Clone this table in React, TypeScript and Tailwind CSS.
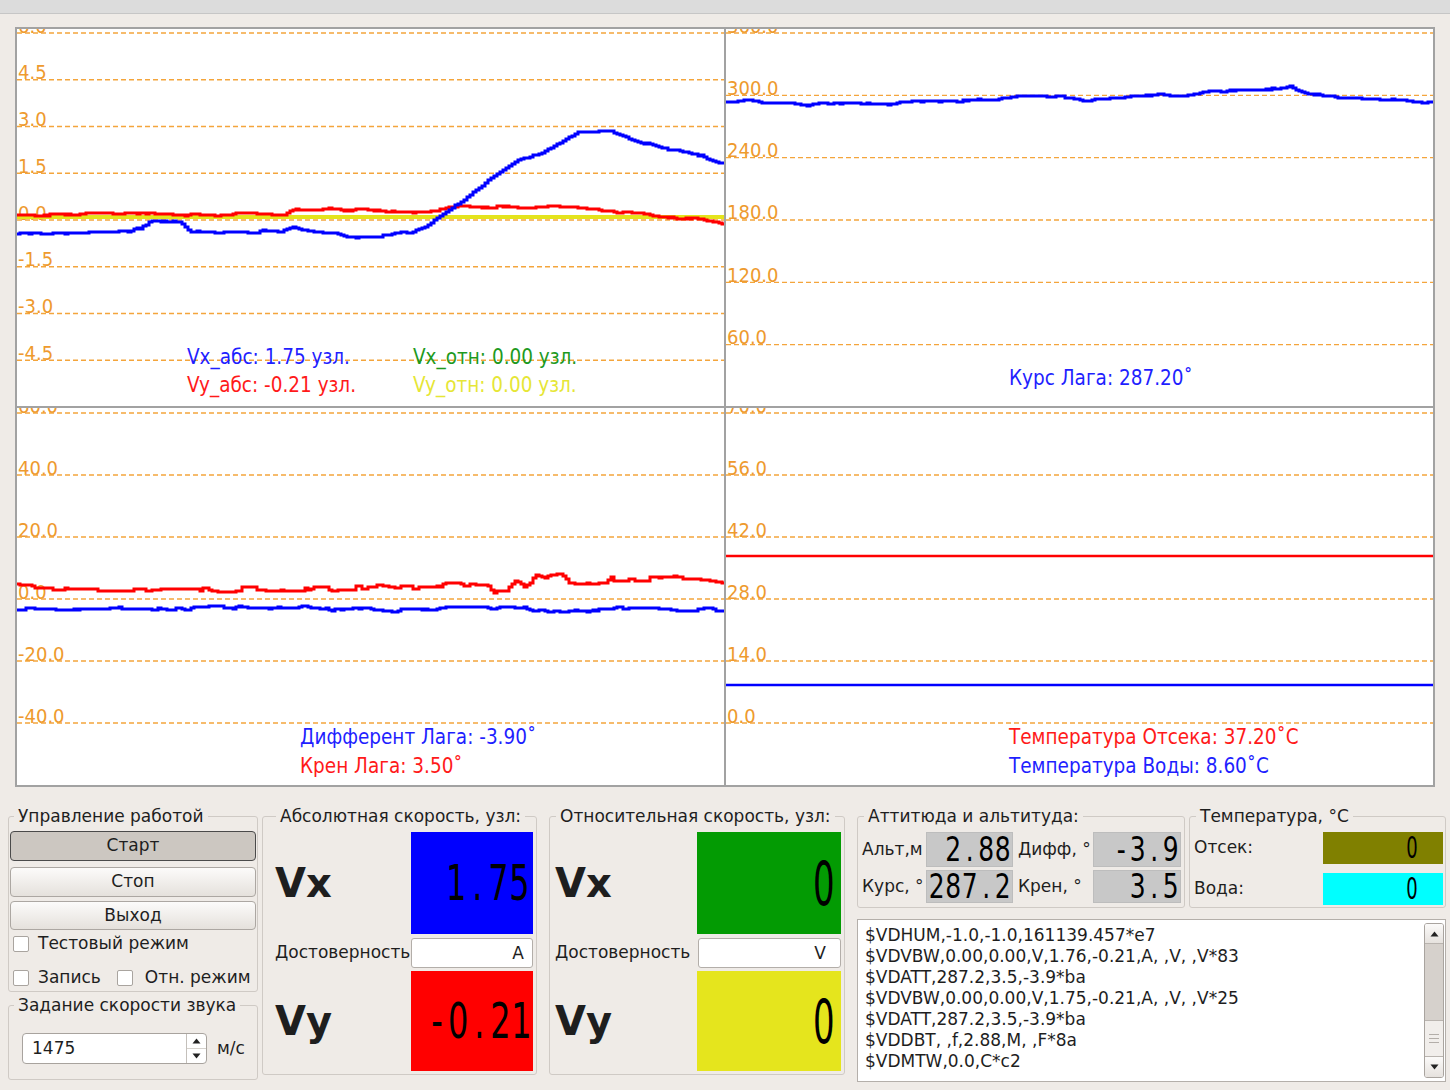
import type { ReactNode } from 'react'

// deterministic noise so the traces look the same on every render
function rng(seed: number): () => number {
  let s = seed >>> 0
  return () => {
    s = (Math.imul(s, 1664525) + 1013904223) >>> 0
    return s / 4294967296
  }
}

function lerp(keys: number[][], x: number): number {
  for (let i = 1; i < keys.length; i++) {
    if (x <= keys[i][0]) {
      const [x0, y0] = keys[i - 1]
      const [x1, y1] = keys[i]
      return y0 + ((y1 - y0) * (x - x0)) / (x1 - x0 || 1)
    }
  }
  return keys[keys.length - 1][1]
}

// stair-step trace through key points, like a sampled log
function trace(keys: number[][], amp: number, seed: number, step = 3): string {
  const rand = rng(seed)
  let off = 0
  const end = keys[keys.length - 1][0]
  let d = ''
  for (let x = keys[0][0]; x <= end; x += step) {
    if (rand() < 0.45) off = Math.max(-amp, Math.min(amp, off * 0.8 + (rand() - 0.5) * amp * 1.6))
    const y = Math.round(lerp(keys, x) + off)
    d += d ? `H${x}V${y}` : `M${x} ${y}`
  }
  return d + `H${end}`
}

const W = 707
const H = 377

interface Legend {
  x: number
  y: number
  color: string
  text: string
}

interface ChartProps {
  first: number
  step: number
  labels: string[]
  children?: ReactNode
  legends: Legend[]
}

function Chart({ first, step, labels, children, legends }: ChartProps) {
  return (
    <svg
      width={W}
      height={H}
      viewBox={`0 0 ${W} ${H}`}
      className="block bg-white font-['DejaVu_Sans_Condensed','DejaVu_Sans',sans-serif] [font-stretch:condensed]"
    >
      {labels.map((l, i) => {
        const y = first + i * step
        return (
          <g key={l}>
            <text x={1} y={y - 0.5} fill="#ee9a2e" fontSize={20}>
              {l}
            </text>
            <line x1={0} x2={W} y1={y} y2={y} stroke="#f4a53c" strokeWidth={1.3} strokeDasharray="5 3" />
          </g>
        )
      })}
      {children}
      {legends.map((l) => (
        <text key={l.text} x={l.x} y={l.y} fill={l.color} fontSize={20.5}>
          {l.text}
        </text>
      ))}
    </svg>
  )
}

const speedBlue = trace(
  [
    [0, 206], [43, 206], [113, 204], [128, 197], [133, 193], [163, 193], [173, 203], [263, 203],
    [273, 200], [303, 204], [323, 207], [393, 205], [408, 199], [428, 185], [463, 159], [503, 131],
    [538, 116], [563, 102], [593, 100], [613, 108], [643, 119], [683, 128], [707, 133]
  ],
  2,
  11
)
const speedRed = trace(
  [
    [0, 186], [183, 185], [268, 185], [275, 180], [323, 181], [333, 183], [343, 180], [363, 182],
    [383, 183], [423, 181], [443, 178], [483, 178], [543, 179], [593, 182], [633, 185], [673, 190],
    [707, 196]
  ],
  1.5,
  23
)
const course = trace(
  [
    [0, 72], [44, 72], [64, 74], [94, 76], [124, 75], [174, 74], [224, 73], [264, 71], [294, 68],
    [334, 68], [364, 71], [394, 70], [414, 68], [434, 65], [449, 68], [484, 63], [534, 62], [549, 60],
    [564, 57], [574, 62], [604, 67], [654, 69], [684, 72], [707, 74]
  ],
  1.5,
  5
)
const rollRed = trace(
  [
    [0, 178], [100, 179], [200, 180], [300, 179], [420, 179], [463, 180], [488, 184], [498, 172],
    [508, 182], [518, 167], [528, 170], [538, 167], [553, 174], [583, 173], [633, 172], [683, 173],
    [707, 177]
  ],
  4,
  77
)
const trimBlue = trace(
  [
    [0, 200], [280, 200], [300, 201], [400, 202], [490, 201], [510, 200], [530, 202], [560, 203],
    [600, 201], [707, 201]
  ],
  2.2,
  41
)

// QLCDNumber look: thin black digits, every character (the point too) gets one cell
function Lcd({ text, className, textClass }: { text: string; className: string; textClass: string }) {
  return (
    <div className={`flex shrink-0 items-center justify-end ${className}`}>
      <span className={`inline-block whitespace-nowrap font-['DejaVu_Sans',sans-serif] leading-none text-black ${textClass}`}>
        {text.split('').map((c, i) => (
          <span key={i} className="inline-block w-[0.66em] text-center">
            {c}
          </span>
        ))}
      </span>
    </div>
  )
}

function Box({ className = '' }: { className?: string }) {
  return (
    <span className={`inline-block h-[16px] w-[16px] shrink-0 rounded-[2px] border border-[#a9a49f] bg-white ${className}`} />
  )
}

function Arrow({ up }: { up: boolean }) {
  return (
    <svg width="9" height="6" viewBox="0 0 9 6">
      <path d={up ? 'M0.5 5.5L4.5 0.5L8.5 5.5Z' : 'M0.5 0.5L4.5 5.5L8.5 0.5Z'} fill="#222" />
    </svg>
  )
}

const nmea = [
  '$VDHUM,-1.0,-1.0,161139.457*e7',
  '$VDVBW,0.00,0.00,V,1.76,-0.21,A, ,V, ,V*83',
  '$VDATT,287.2,3.5,-3.9*ba',
  '$VDVBW,0.00,0.00,V,1.75,-0.21,A, ,V, ,V*25',
  '$VDATT,287.2,3.5,-3.9*ba',
  '$VDDBT, ,f,2.88,M, ,F*8a',
  '$VDMTW,0.0,C*c2'
]

const group = 'rounded-[3px] border border-[#cfcac5]'
const btn = 'block w-full rounded-[4px] border border-[#aca7a2] bg-linear-to-b from-[#fcfbfa] to-[#e5e1dc]'

export default function App() {
  return (
    <div className="h-[1090px] w-[1450px] overflow-hidden bg-[#efebe7] font-['DejaVu_Sans',sans-serif] text-[17px] text-[#1e1e1e]">
      <div className="h-[14px] border-b border-[#c6c6c6] bg-[#dcdcdc]" />

      {/* plots */}
      <div className="ml-[15px] mt-[13px] grid w-[1420px] grid-cols-[707px_707px] grid-rows-[377px_377px] gap-[2px] border-2 border-[#a2a2a2] bg-[#a2a2a2]">
        <Chart
          first={4}
          step={46.75}
          labels={['6.0', '4.5', '3.0', '1.5', '0.0', '-1.5', '-3.0', '-4.5']}
          legends={[
            { x: 170, y: 335, color: '#1f1fff', text: 'Vx_абс: 1.75 узл.' },
            { x: 396, y: 335, color: '#1e9a1e', text: 'Vx_отн: 0.00 узл.' },
            { x: 170, y: 363, color: '#ff1a1a', text: 'Vy_абс: -0.21 узл.' },
            { x: 396, y: 363, color: '#e6e636', text: 'Vy_отн: 0.00 узл.' }
          ]}
        >
          <line x1={0} x2={W} y1={188} y2={188} stroke="#e4e41c" strokeWidth={4} />
          <path d={speedRed} fill="none" stroke="#ff0000" strokeWidth={3} />
          <path d={speedBlue} fill="none" stroke="#0000ff" strokeWidth={3} />
        </Chart>
        <Chart
          first={4}
          step={62.33}
          labels={['360.0', '300.0', '240.0', '180.0', '120.0', '60.0']}
          legends={[{ x: 283, y: 356, color: '#1f1fff', text: 'Курс Лага: 287.20˚' }]}
        >
          <path d={course} fill="none" stroke="#0000ff" strokeWidth={3} />
        </Chart>
        <Chart
          first={5}
          step={62}
          labels={['60.0', '40.0', '20.0', '0.0', '-20.0', '-40.0']}
          legends={[
            { x: 283, y: 336, color: '#1f1fff', text: 'Дифферент Лага: -3.90˚' },
            { x: 283, y: 365, color: '#ff1a1a', text: 'Крен Лага: 3.50˚' }
          ]}
        >
          <path d={rollRed} fill="none" stroke="#ff0000" strokeWidth={3} />
          <path d={trimBlue} fill="none" stroke="#0000ff" strokeWidth={3} />
        </Chart>
        <Chart
          first={5}
          step={62}
          labels={['70.0', '56.0', '42.0', '28.0', '14.0', '0.0']}
          legends={[
            { x: 283, y: 336, color: '#ff1a1a', text: 'Температура Отсека: 37.20˚C' },
            { x: 283, y: 365, color: '#1f1fff', text: 'Температура Воды: 8.60˚C' }
          ]}
        >
          <line x1={0} x2={W} y1={148} y2={148} stroke="#ff0000" strokeWidth={2.5} />
          <line x1={0} x2={W} y1={277} y2={277} stroke="#0000ff" strokeWidth={2.5} />
        </Chart>
      </div>

      {/* controls */}
      <div className="flex items-start pl-[8px] pt-[19px]">
        <div className="flex w-[250px] flex-col">
          <fieldset className={group}>
            <legend className="ml-[5px] px-[4px] leading-[20px]">Управление работой</legend>
            <div className="px-[1px] pb-[4px] pt-[5px]">
              <button className="block h-[30px] w-full rounded-[4px] border border-[#4a4a4a] bg-[#ccc7c1]">Старт</button>
              <button className={`mt-[6px] h-[30px] ${btn}`}>Стоп</button>
              <button className={`mt-[4px] h-[29px] ${btn}`}>Выход</button>
              <div className="mt-[5px] flex h-[18px] items-center gap-[9px] pl-[3px]">
                <Box />
                <span>Тестовый режим</span>
              </div>
              <div className="mt-[16px] flex h-[18px] items-center pl-[3px]">
                <Box />
                <span className="ml-[9px]">Запись</span>
                <Box className="ml-[16px]" />
                <span className="ml-[12px]">Отн. режим</span>
              </div>
            </div>
          </fieldset>
          <fieldset className={`mt-[3px] ${group}`}>
            <legend className="ml-[5px] px-[4px] leading-[20px]">Задание скорости звука</legend>
            <div className="flex items-center pb-[15px] pl-[13px] pt-[18px]">
              <div className="flex h-[31px] w-[185px] overflow-hidden rounded-[4px] border border-[#a8a39e] bg-white">
                <span className="flex-1 pl-[9px] leading-[29px]">1475</span>
                <div className="flex w-[20px] flex-col border-l border-[#c4c0bb]">
                  <div className="flex flex-1 items-center justify-center border-b border-[#d6d2cd]">
                    <Arrow up />
                  </div>
                  <div className="flex flex-1 items-center justify-center">
                    <Arrow up={false} />
                  </div>
                </div>
              </div>
              <span className="ml-[10px]">м/с</span>
            </div>
          </fieldset>
        </div>

        <fieldset className={`ml-[4px] w-[275px] ${group}`}>
          <legend className="ml-[13px] px-[4px] leading-[20px]">Абсолютная скорость, узл:</legend>
          <div className="pb-[3px] pl-[12px] pr-[3px] pt-[6px]">
            <div className="flex h-[102px] items-center">
              <span className="flex-1 text-[40px] font-bold">Vx</span>
              <Lcd text="1.75" className="h-[102px] w-[122px] bg-[#0000ff] pr-[3px]" textClass="text-[32px] scale-y-[1.58]" />
            </div>
            <div className="mt-[4px] flex h-[30px] items-center">
              <span className="flex-1 whitespace-nowrap">Достоверность</span>
              <div className="h-[30px] w-[122px] shrink-0 rounded-[3px] border border-[#b3aea9] bg-white pr-[8px] text-right leading-[28px]">A</div>
            </div>
            <div className="mt-[3px] flex h-[100px] items-center">
              <span className="flex-1 text-[40px] font-bold">Vy</span>
              <Lcd text="-0.21" className="h-[100px] w-[122px] bg-[#ff0000] pr-[1px]" textClass="text-[32px] scale-y-[1.58]" />
            </div>
          </div>
        </fieldset>

        <fieldset className={`ml-[12px] w-[296px] ${group}`}>
          <legend className="ml-[6px] px-[4px] leading-[20px]">Относительная скорость, узл:</legend>
          <div className="pb-[3px] pl-[5px] pr-[3px] pt-[6px]">
            <div className="flex h-[102px] items-center">
              <span className="flex-1 text-[40px] font-bold">Vx</span>
              <Lcd text="0" className="h-[102px] w-[144px] bg-[#039b03] pr-[6px]" textClass="text-[34px] scale-y-[1.8]" />
            </div>
            <div className="mt-[4px] flex h-[30px] items-center">
              <span className="flex-1 whitespace-nowrap">Достоверность</span>
              <div className="h-[30px] w-[143px] shrink-0 rounded-[3px] border border-[#b3aea9] bg-white pr-[14px] text-right leading-[28px]">V</div>
            </div>
            <div className="mt-[3px] flex h-[100px] items-center">
              <span className="flex-1 text-[40px] font-bold">Vy</span>
              <Lcd text="0" className="h-[100px] w-[144px] bg-[#e5e51d] pr-[6px]" textClass="text-[34px] scale-y-[1.8]" />
            </div>
          </div>
        </fieldset>

        <div className="ml-[12px] flex w-[589px] flex-col">
          <div className="flex">
            <fieldset className={`w-[328px] ${group}`}>
              <legend className="ml-[6px] px-[4px] leading-[20px]">Аттитюда и альтитуда:</legend>
              <div className="grid grid-cols-[64px_87px_80px_88px] grid-rows-[35px_33px] gap-y-[3px] pb-[4px] pl-[4px] pr-[3px] pt-[6px]">
                <span className="self-center">Альт,м</span>
                <Lcd text="2.88" className="border border-[#bdbdbd] bg-[#c8c8c8] pr-[1px]" textClass="text-[25px] scale-y-[1.32]" />
                <span className="self-center pl-[5px]">Дифф, °</span>
                <Lcd text="-3.9" className="border border-[#bdbdbd] bg-[#c8c8c8] pr-[1px]" textClass="text-[25px] scale-y-[1.32]" />
                <span className="self-center">Курс, °</span>
                <Lcd text="287.2" className="border border-[#bdbdbd] bg-[#c8c8c8] pr-[1px]" textClass="text-[25px] scale-y-[1.32]" />
                <span className="self-center pl-[5px]">Крен, °</span>
                <Lcd text="3.5" className="border border-[#bdbdbd] bg-[#c8c8c8] pr-[1px]" textClass="text-[25px] scale-y-[1.32]" />
              </div>
            </fieldset>
            <fieldset className={`ml-[4px] w-[257px] ${group}`}>
              <legend className="ml-[6px] px-[4px] leading-[20px]">Температура, °C</legend>
              <div className="grid grid-cols-[129px_120px] grid-rows-[32px_32px] gap-y-[9px] pb-[2px] pl-[4px] pr-[2px] pt-[6px]">
                <span className="self-center">Отсек:</span>
                <Lcd text="0" className="bg-[#808000] pr-[25px]" textClass="text-[18px] scale-y-[1.65]" />
                <span className="self-center">Вода:</span>
                <Lcd text="0" className="bg-[#00ffff] pr-[25px]" textClass="text-[18px] scale-y-[1.65]" />
              </div>
            </fieldset>
          </div>

          <div className="mt-[11px] flex h-[163px] border border-[#b4afaa] bg-white">
            <div className="flex-1 whitespace-pre pl-[7px] pt-[5px] leading-[21px]">
              {nmea.map((l, i) => (
                <div key={i}>{l}</div>
              ))}
            </div>
            <div className="my-[3px] mr-[1px] flex w-[20px] flex-col overflow-hidden rounded-[3px] border border-[#a9a49f]">
              <div className="flex h-[20px] items-center justify-center border-b border-[#b9b4af] bg-linear-to-b from-[#fbfaf9] to-[#e6e2de]">
                <Arrow up />
              </div>
              <div className="flex-1 bg-[#d6d1cc]" />
              <div className="flex h-[37px] flex-col items-center justify-center gap-[3px] border-y border-[#b9b4af] bg-[#f1eeeb]">
                <span className="block h-px w-[10px] bg-[#b3aea9]" />
                <span className="block h-px w-[10px] bg-[#b3aea9]" />
                <span className="block h-px w-[10px] bg-[#b3aea9]" />
              </div>
              <div className="flex h-[20px] items-center justify-center bg-linear-to-b from-[#fbfaf9] to-[#e6e2de]">
                <Arrow up={false} />
              </div>
            </div>
          </div>
        </div>
      </div>
    </div>
  )
}
